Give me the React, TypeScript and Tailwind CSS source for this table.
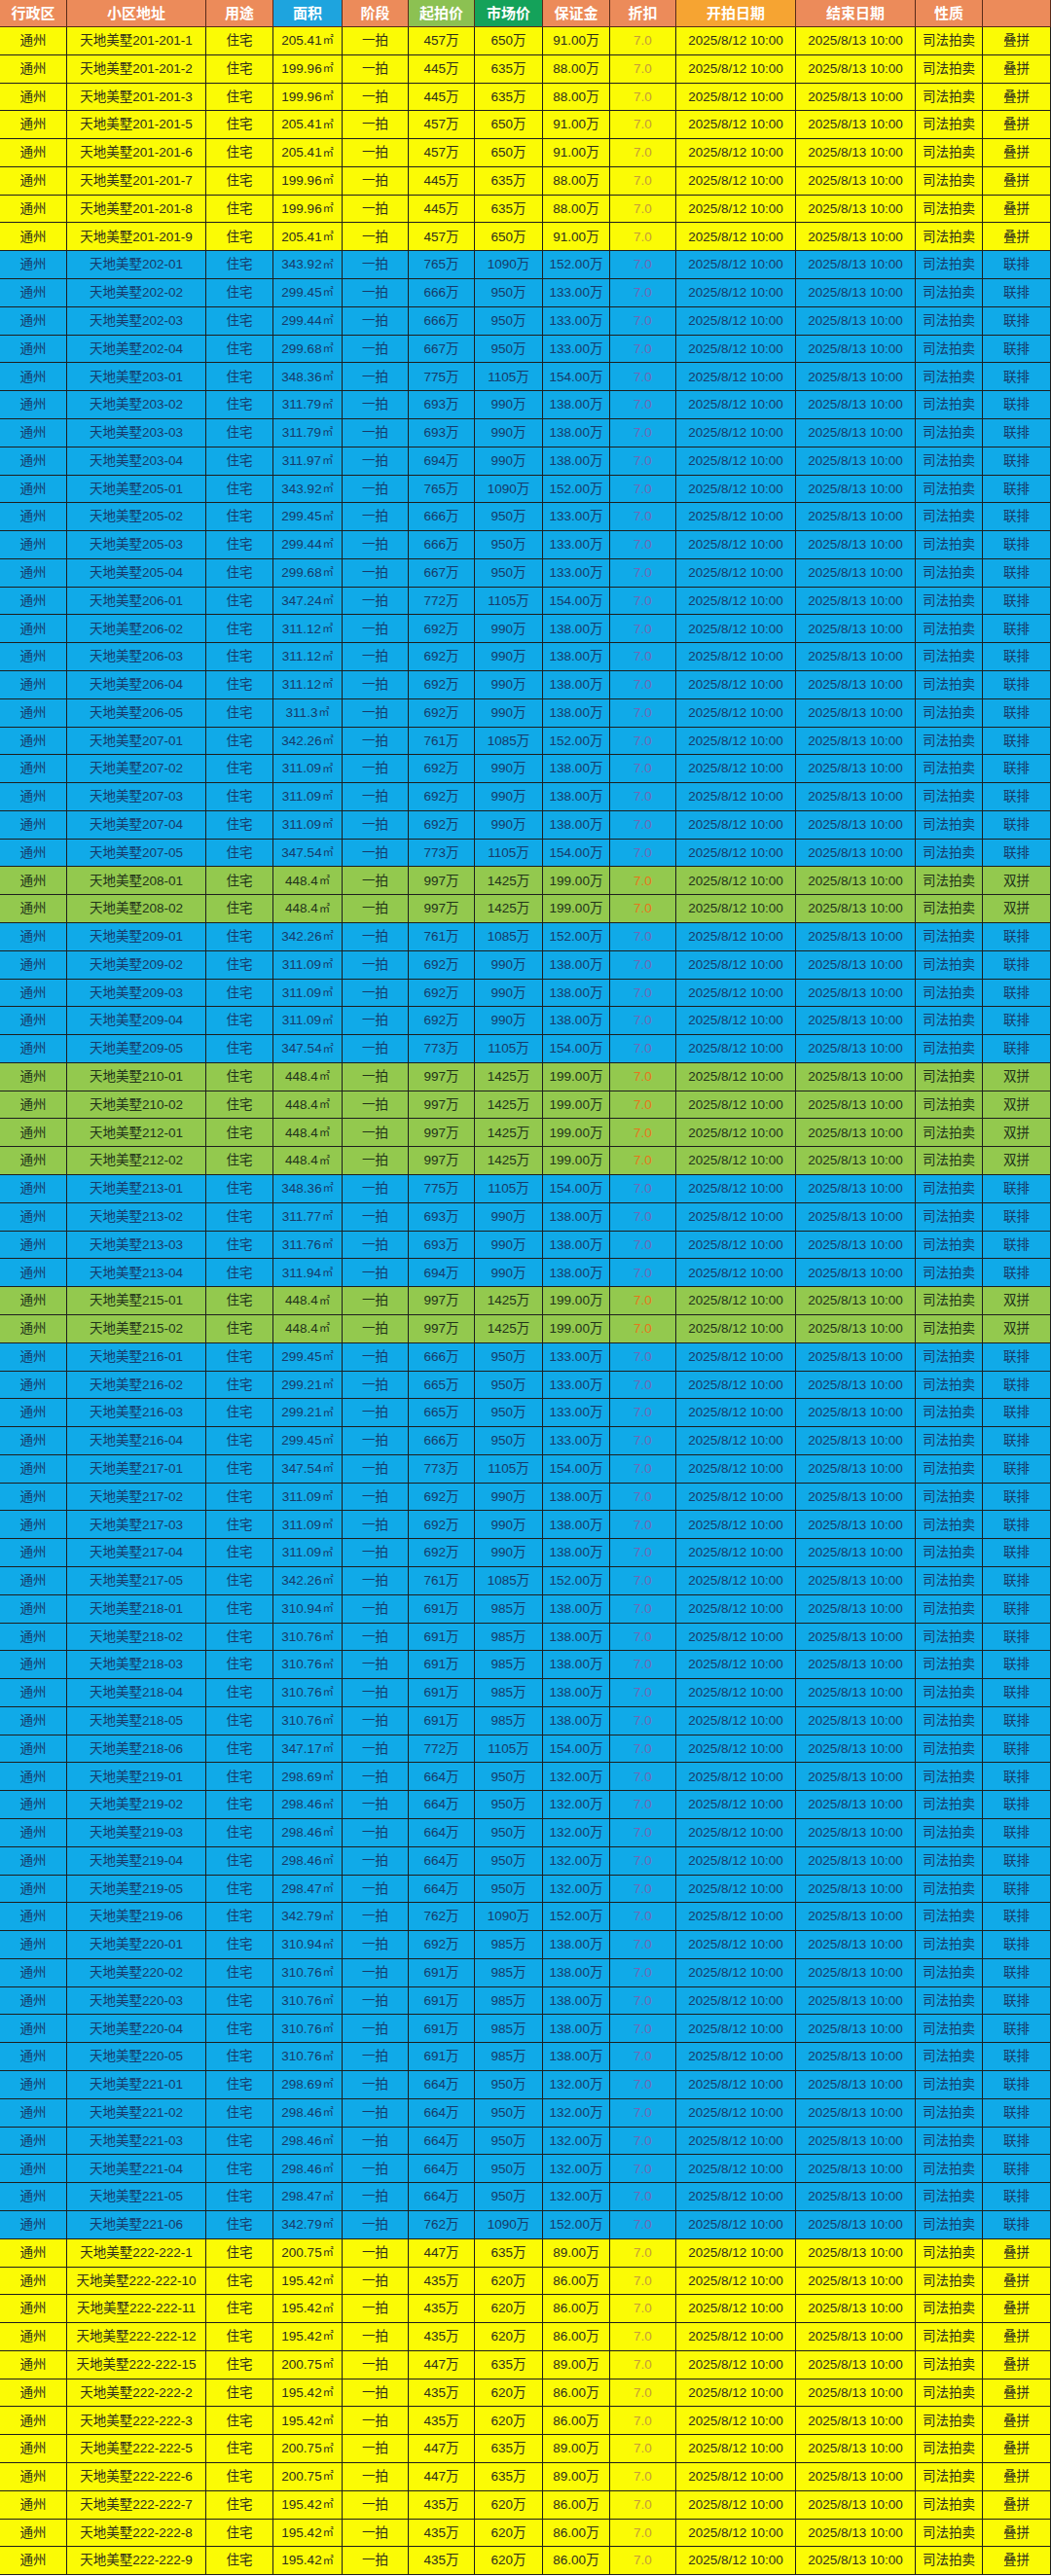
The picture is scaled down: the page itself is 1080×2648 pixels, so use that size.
import React from "react";

type Kind = "y" | "b" | "g";
type Row = [string, string, string, string, string, Kind];

const rows: Row[] = [
  ["201-201-1", "205.41", "457", "650", "91.00", "y"],
  ["201-201-2", "199.96", "445", "635", "88.00", "y"],
  ["201-201-3", "199.96", "445", "635", "88.00", "y"],
  ["201-201-5", "205.41", "457", "650", "91.00", "y"],
  ["201-201-6", "205.41", "457", "650", "91.00", "y"],
  ["201-201-7", "199.96", "445", "635", "88.00", "y"],
  ["201-201-8", "199.96", "445", "635", "88.00", "y"],
  ["201-201-9", "205.41", "457", "650", "91.00", "y"],
  ["202-01", "343.92", "765", "1090", "152.00", "b"],
  ["202-02", "299.45", "666", "950", "133.00", "b"],
  ["202-03", "299.44", "666", "950", "133.00", "b"],
  ["202-04", "299.68", "667", "950", "133.00", "b"],
  ["203-01", "348.36", "775", "1105", "154.00", "b"],
  ["203-02", "311.79", "693", "990", "138.00", "b"],
  ["203-03", "311.79", "693", "990", "138.00", "b"],
  ["203-04", "311.97", "694", "990", "138.00", "b"],
  ["205-01", "343.92", "765", "1090", "152.00", "b"],
  ["205-02", "299.45", "666", "950", "133.00", "b"],
  ["205-03", "299.44", "666", "950", "133.00", "b"],
  ["205-04", "299.68", "667", "950", "133.00", "b"],
  ["206-01", "347.24", "772", "1105", "154.00", "b"],
  ["206-02", "311.12", "692", "990", "138.00", "b"],
  ["206-03", "311.12", "692", "990", "138.00", "b"],
  ["206-04", "311.12", "692", "990", "138.00", "b"],
  ["206-05", "311.3", "692", "990", "138.00", "b"],
  ["207-01", "342.26", "761", "1085", "152.00", "b"],
  ["207-02", "311.09", "692", "990", "138.00", "b"],
  ["207-03", "311.09", "692", "990", "138.00", "b"],
  ["207-04", "311.09", "692", "990", "138.00", "b"],
  ["207-05", "347.54", "773", "1105", "154.00", "b"],
  ["208-01", "448.4", "997", "1425", "199.00", "g"],
  ["208-02", "448.4", "997", "1425", "199.00", "g"],
  ["209-01", "342.26", "761", "1085", "152.00", "b"],
  ["209-02", "311.09", "692", "990", "138.00", "b"],
  ["209-03", "311.09", "692", "990", "138.00", "b"],
  ["209-04", "311.09", "692", "990", "138.00", "b"],
  ["209-05", "347.54", "773", "1105", "154.00", "b"],
  ["210-01", "448.4", "997", "1425", "199.00", "g"],
  ["210-02", "448.4", "997", "1425", "199.00", "g"],
  ["212-01", "448.4", "997", "1425", "199.00", "g"],
  ["212-02", "448.4", "997", "1425", "199.00", "g"],
  ["213-01", "348.36", "775", "1105", "154.00", "b"],
  ["213-02", "311.77", "693", "990", "138.00", "b"],
  ["213-03", "311.76", "693", "990", "138.00", "b"],
  ["213-04", "311.94", "694", "990", "138.00", "b"],
  ["215-01", "448.4", "997", "1425", "199.00", "g"],
  ["215-02", "448.4", "997", "1425", "199.00", "g"],
  ["216-01", "299.45", "666", "950", "133.00", "b"],
  ["216-02", "299.21", "665", "950", "133.00", "b"],
  ["216-03", "299.21", "665", "950", "133.00", "b"],
  ["216-04", "299.45", "666", "950", "133.00", "b"],
  ["217-01", "347.54", "773", "1105", "154.00", "b"],
  ["217-02", "311.09", "692", "990", "138.00", "b"],
  ["217-03", "311.09", "692", "990", "138.00", "b"],
  ["217-04", "311.09", "692", "990", "138.00", "b"],
  ["217-05", "342.26", "761", "1085", "152.00", "b"],
  ["218-01", "310.94", "691", "985", "138.00", "b"],
  ["218-02", "310.76", "691", "985", "138.00", "b"],
  ["218-03", "310.76", "691", "985", "138.00", "b"],
  ["218-04", "310.76", "691", "985", "138.00", "b"],
  ["218-05", "310.76", "691", "985", "138.00", "b"],
  ["218-06", "347.17", "772", "1105", "154.00", "b"],
  ["219-01", "298.69", "664", "950", "132.00", "b"],
  ["219-02", "298.46", "664", "950", "132.00", "b"],
  ["219-03", "298.46", "664", "950", "132.00", "b"],
  ["219-04", "298.46", "664", "950", "132.00", "b"],
  ["219-05", "298.47", "664", "950", "132.00", "b"],
  ["219-06", "342.79", "762", "1090", "152.00", "b"],
  ["220-01", "310.94", "692", "985", "138.00", "b"],
  ["220-02", "310.76", "691", "985", "138.00", "b"],
  ["220-03", "310.76", "691", "985", "138.00", "b"],
  ["220-04", "310.76", "691", "985", "138.00", "b"],
  ["220-05", "310.76", "691", "985", "138.00", "b"],
  ["221-01", "298.69", "664", "950", "132.00", "b"],
  ["221-02", "298.46", "664", "950", "132.00", "b"],
  ["221-03", "298.46", "664", "950", "132.00", "b"],
  ["221-04", "298.46", "664", "950", "132.00", "b"],
  ["221-05", "298.47", "664", "950", "132.00", "b"],
  ["221-06", "342.79", "762", "1090", "152.00", "b"],
  ["222-222-1", "200.75", "447", "635", "89.00", "y"],
  ["222-222-10", "195.42", "435", "620", "86.00", "y"],
  ["222-222-11", "195.42", "435", "620", "86.00", "y"],
  ["222-222-12", "195.42", "435", "620", "86.00", "y"],
  ["222-222-15", "200.75", "447", "635", "89.00", "y"],
  ["222-222-2", "195.42", "435", "620", "86.00", "y"],
  ["222-222-3", "195.42", "435", "620", "86.00", "y"],
  ["222-222-5", "200.75", "447", "635", "89.00", "y"],
  ["222-222-6", "200.75", "447", "635", "89.00", "y"],
  ["222-222-7", "195.42", "435", "620", "86.00", "y"],
  ["222-222-8", "195.42", "435", "620", "86.00", "y"],
  ["222-222-9", "195.42", "435", "620", "86.00", "y"],
];

const GRID =
  "grid grid-cols-[69px_143px_69px_71px_68px_68px_70px_69px_68px_123px_123px_69px_70px]";

const rowStyle: Record<Kind, { bg: string; text: string; disc: string; type: string }> = {
  y: { bg: "bg-[#fbfb05]", text: "text-[#2e2e1c]", disc: "text-[#c49a3c]", type: "叠拼" },
  b: { bg: "bg-[#10aae8]", text: "text-[#173a6a]", disc: "text-[#7466b4]", type: "联排" },
  g: { bg: "bg-[#93c94e]", text: "text-[#22331a]", disc: "text-[#e8741c]", type: "双拼" },
};

const headers: { label: string; bg: string }[] = [
  { label: "行政区", bg: "bg-[#ec8b5a]" },
  { label: "小区地址", bg: "bg-[#ec8b5a]" },
  { label: "用途", bg: "bg-[#ec8b5a]" },
  { label: "面积", bg: "bg-[#1ea4de]" },
  { label: "阶段", bg: "bg-[#ec8b5a]" },
  { label: "起拍价", bg: "bg-[#8cc152]" },
  { label: "市场价", bg: "bg-[#14a25a]" },
  { label: "保证金", bg: "bg-[#ec8b5a]" },
  { label: "折扣", bg: "bg-[#ec8b5a]" },
  { label: "开拍日期", bg: "bg-[#f6a432]" },
  { label: "结束日期", bg: "bg-[#ec8b5a]" },
  { label: "性质", bg: "bg-[#ec8b5a]" },
  { label: "", bg: "bg-[#ec8b5a]" },
];

const font = {
  fontFamily: '"Liberation Sans", "Noto Sans CJK SC", sans-serif',
};

function Cell({ children, className = "" }: { children?: React.ReactNode; className?: string }) {
  return (
    <div
      className={`flex items-center justify-center whitespace-nowrap border-r border-b border-[#1e1e1e] ${className}`}
    >
      {children}
    </div>
  );
}

export default function App() {
  return (
    <div className="w-[1080px] h-[2648px] overflow-hidden bg-white" style={font}>
      <div className={`${GRID} h-[28px]`}>
        {headers.map((h, i) => (
          <div
            key={i}
            className={`flex items-center justify-center border-r border-b border-[#5a2a1a] ${h.bg} text-white text-[15px] font-bold leading-none`}
          >
            {h.label}
          </div>
        ))}
      </div>
      {rows.map((r, i) => {
        const s = rowStyle[r[5]];
        return (
          <div key={i} className={`${GRID} h-[28.79px] ${s.bg} ${s.text} text-[13.5px] leading-none`}>
            <Cell>通州</Cell>
            <Cell>天地美墅{r[0]}</Cell>
            <Cell>住宅</Cell>
            <Cell>
              {r[1]}
              <span className="text-[11px] ml-[1px]">㎡</span>
            </Cell>
            <Cell>一拍</Cell>
            <Cell>{r[2]}万</Cell>
            <Cell>{r[3]}万</Cell>
            <Cell>{r[4]}万</Cell>
            <Cell className={s.disc}>7.0</Cell>
            <Cell>2025/8/12 10:00</Cell>
            <Cell>2025/8/13 10:00</Cell>
            <Cell>司法拍卖</Cell>
            <Cell>{s.type}</Cell>
          </div>
        );
      })}
    </div>
  );
}
